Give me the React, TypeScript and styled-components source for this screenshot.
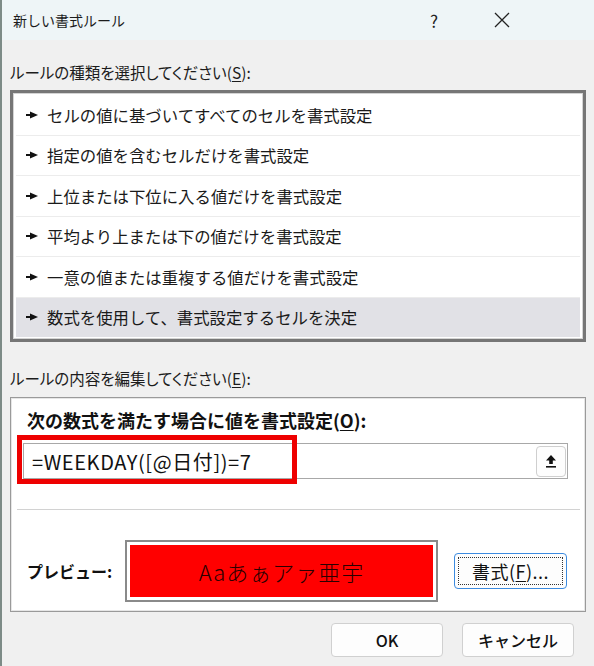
import React from "react";
import styled, { createGlobalStyle } from "styled-components";

const Global = createGlobalStyle`
  html, body { margin: 0; padding: 0; background: #f0f0f0; }
  body { font-family: "Noto Sans CJK JP", "Noto Sans", sans-serif; color: #1a1a1a; }
  * { box-sizing: border-box; }
`;

const Window = styled.div`
  width: 594px;
  height: 666px;
  background: #f0f0f0;
  border-left: 2px solid #7d8b87;
  overflow: hidden;
  display: flex;
  flex-direction: column;
`;

const TitleBar = styled.div`
  height: 40px;
  background: #eef5f7;
  display: flex;
  align-items: center;
  padding-left: 11px;
`;

const Title = styled.div`
  font-size: 14px;
  flex: 1;
  color: #1c1c1c;
`;

const TitleIcon = styled.div<{ $w: number }>`
  width: ${(p) => p.$w}px;
  height: 40px;
  display: flex;
  align-items: center;
  justify-content: center;
  font-size: 17px;
  color: #222;
`;

const Body = styled.div`
  padding: 0 8px 0 8px;
  display: flex;
  flex-direction: column;
`;

const SectionLabel = styled.div<{ $mt: number }>`
  margin-top: ${(p) => p.$mt}px;
  height: 22px;
  line-height: 22px;
  font-size: 15.5px;
  font-feature-settings: "palt";
  color: #1c1c1c;
`;

const U = styled.span`
  text-decoration: underline;
  text-underline-offset: 2px;
`;

const ListBox = styled.div`
  margin-top: 7px;
  height: 252px;
  background: #fff;
  border: 3px solid #767676;
  box-shadow: inset 0 0 0 1px #d4d4d4;
  padding: 2px 3px;
  display: flex;
  flex-direction: column;
`;

const Row = styled.div<{ $sel?: boolean; $last?: boolean }>`
  height: ${(p) => (p.$last ? 40 : 41)}px;
  display: flex;
  align-items: center;
  padding-left: 10px;
  gap: 9px;
  font-size: 16.4px;
  color: #1a1a1a;
  background: ${(p) => (p.$sel ? "#e1e1e6" : "#fff")};
  border-bottom: ${(p) => (p.$last ? "none" : "1px solid #ececec")};
`;

const EditBox = styled.div`
  margin-top: 8px;
  height: 215px;
  background: #fff;
  border: 1px solid #9a9a9a;
  box-shadow: inset 0 0 0 1px #e6e6e6;
  padding: 11px 17px 0 12px;
  display: flex;
  flex-direction: column;
`;

const BoldLabel = styled.div`
  height: 22px;
  line-height: 22px;
  font-size: 18px;
  font-weight: 700;
  padding-left: 4px;
  color: #111;
`;

const InputWrap = styled.div`
  position: relative;
  margin-top: 12px;
`;

const Input = styled.div`
  height: 36px;
  border: 1px solid #a8a8a8;
  background: #fff;
  display: flex;
  align-items: center;
  padding-left: 8px;
  padding-right: 1px;
  font-size: 20px;
  letter-spacing: 0.6px;
  color: #111;
`;

const InputText = styled.div`
  flex: 1;
`;

const RefButton = styled.div`
  width: 30px;
  height: 31px;
  border: 1px solid #cfcfcf;
  border-radius: 4px;
  background: #fdfdfd;
  display: flex;
  align-items: center;
  justify-content: center;
`;

const Highlight = styled.div`
  position: absolute;
  left: -6px;
  top: -8px;
  width: 280px;
  height: 49px;
  border: 5px solid #ee0000;
  pointer-events: none;
`;

const Separator = styled.div`
  margin: 30px -12px 0 -6px;
  height: 1px;
  background: #d2d2d2;
`;

const PreviewRow = styled.div`
  margin-top: 30px;
  height: 62px;
  display: flex;
  align-items: center;
`;

const PreviewLabel = styled.div`
  width: 102px;
  padding-left: 4px;
  font-size: 16px;
  font-weight: 700;
  color: #111;
`;

const PreviewBox = styled.div`
  width: 313px;
  height: 62px;
  border: 2px solid #8a8a8a;
  background: #fff;
  padding: 3px;
`;

const PreviewFill = styled.div`
  height: 100%;
  background: #ff0000;
  display: flex;
  align-items: center;
  justify-content: center;
  font-size: 22px;
  font-weight: 300;
  letter-spacing: 1px;
  color: #2a0000;
`;

const FormatButton = styled.div`
  margin-left: 16px;
  width: 113px;
  height: 36px;
  border: 1px solid #3c8be0;
  border-radius: 4px;
  background: #fdfdfd;
  padding: 3px;
`;

const FocusRect = styled.div`
  height: 100%;
  border: 1px dotted #333;
  display: flex;
  align-items: center;
  justify-content: center;
  font-size: 18px;
  letter-spacing: 0.5px;
  color: #111;
`;

const Footer = styled.div`
  margin-top: 11px;
  display: flex;
  justify-content: flex-end;
  gap: 19px;
  padding-right: 12px;
`;

const DialogButton = styled.div`
  width: 112px;
  height: 34px;
  border: 1px solid #d0d0d0;
  border-radius: 4px;
  background: #fdfdfd;
  display: flex;
  align-items: center;
  justify-content: center;
  font-size: 16px;
  font-weight: 500;
  color: #111;
`;

const RuleArrow = () => (
  <svg width="12" height="8" viewBox="0 0 12 8">
    <rect x="0" y="3" width="6" height="2" fill="#111" />
    <polygon points="4,0.5 12,4 4,7.5" fill="#111" />
  </svg>
);

const rules = [
  "セルの値に基づいてすべてのセルを書式設定",
  "指定の値を含むセルだけを書式設定",
  "上位または下位に入る値だけを書式設定",
  "平均より上または下の値だけを書式設定",
  "一意の値または重複する値だけを書式設定",
  "数式を使用して、書式設定するセルを決定",
];

export default function App() {
  return (
    <>
      <Global />
      <Window>
        <TitleBar>
          <Title>新しい書式ルール</Title>
          <TitleIcon $w={40}>?</TitleIcon>
          <TitleIcon $w={28} />
          <TitleIcon $w={40}>
            <svg width="16" height="16" viewBox="0 0 16 16">
              <path d="M1 1 L15 15 M15 1 L1 15" stroke="#222" strokeWidth="1.3" />
            </svg>
          </TitleIcon>
          <TitleIcon $w={72} />
        </TitleBar>
        <Body>
          <SectionLabel $mt={21}>
            ルールの種類を選択してください(<U>S</U>):
          </SectionLabel>
          <ListBox>
            {rules.map((r, i) => (
              <Row key={r} $sel={i === rules.length - 1} $last={i === rules.length - 1}>
                <RuleArrow />
                <span>{r}</span>
              </Row>
            ))}
          </ListBox>
          <SectionLabel $mt={25}>
            ルールの内容を編集してください(<U>E</U>):
          </SectionLabel>
          <EditBox>
            <BoldLabel>
              次の数式を満たす場合に値を書式設定(<U>O</U>):
            </BoldLabel>
            <InputWrap>
              <Input>
                <InputText>=WEEKDAY([@日付])=7</InputText>
                <RefButton>
                  <svg width="14" height="14" viewBox="0 0 14 14">
                    <path d="M7 1 L12 6.5 H8.8 V10 H5.2 V6.5 H2 Z" fill="#111" />
                    <rect x="2" y="12" width="10" height="1.6" fill="#111" />
                  </svg>
                </RefButton>
              </Input>
              <Highlight />
            </InputWrap>
            <Separator />
            <PreviewRow>
              <PreviewLabel>プレビュー:</PreviewLabel>
              <PreviewBox>
                <PreviewFill>Aaあぁアァ亜宇</PreviewFill>
              </PreviewBox>
              <FormatButton>
                <FocusRect>
                  書式(<U>F</U>)...
                </FocusRect>
              </FormatButton>
            </PreviewRow>
          </EditBox>
          <Footer>
            <DialogButton>OK</DialogButton>
            <DialogButton>キャンセル</DialogButton>
          </Footer>
        </Body>
      </Window>
    </>
  );
}
